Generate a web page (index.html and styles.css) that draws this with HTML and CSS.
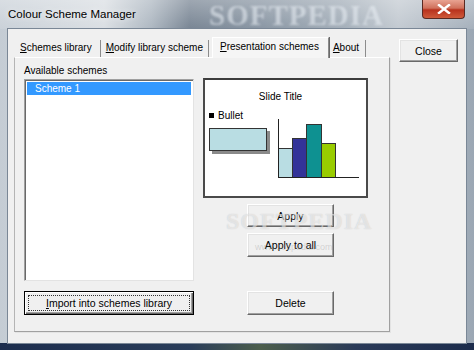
FILE: index.html
```html
<!DOCTYPE html>
<html>
<head>
    <title>Colour Scheme Manager</title>
    <link rel="stylesheet" href="styles.css">
</head>
<body>
    <div class="window">
        <div class="titlebar">
            <span class="title">Colour Scheme Manager</span>
            <span class="wm-title">SOFTPEDIA</span>
            <div class="close-x">
                <svg width="14" height="10" viewBox="0 0 14 10">
                    <path d="M2 1 L12 9 M12 1 L2 9" stroke="#fff" stroke-width="2.4" stroke-linecap="square"/>
                </svg>
            </div>
        </div>

        <div class="client">
            <div class="tabs-area">
                <!-- tab headers -->
                <div class="tabstrip">
                    <div class="tab first"><u>S</u>chemes library</div>
                    <div class="tab"><u>M</u>odify library scheme</div>
                    <div class="tab active"><u>P</u>resentation schemes</div>
                    <div class="tab last"><u>A</u>bout</div>
                </div>

                <!-- current page -->
                <div class="panel">
                    <div class="label">Available schemes</div>
                    <div></div>

                    <div class="listbox">
                        <div class="list-item selected">Scheme 1</div>
                    </div>

                    <div class="right-col">
                        <div class="preview">
                            <div class="slide-title">Slide Title</div>
                            <div class="slide-body">
                                <div class="slide-left">
                                    <div class="bullet"><span class="dot"></span>Bullet</div>
                                    <div class="slide-box"></div>
                                </div>
                                <svg class="chart" width="86" height="60" viewBox="0 0 86 60">
                                    <rect x="1.5" y="29.5" width="14" height="29" fill="#b9dde3" stroke="#333" />
                                    <rect x="15.5" y="19.5" width="14" height="39" fill="#333399" stroke="#333" />
                                    <rect x="29.5" y="5.5" width="15" height="53" fill="#0e9191" stroke="#333" />
                                    <rect x="44.5" y="24.5" width="14" height="34" fill="#99cc00" stroke="#333" />
                                    <path d="M1.5 0 V58.5 H82" stroke="#222" fill="none" />
                                </svg>
                            </div>
                        </div>
                        <button class="btn side-btn first">Apply</button>
                        <button class="btn side-btn">Apply to all</button>
                    </div>

                    <button class="btn default"><span class="focus"><u>I</u>mport into schemes library</span></button>
                    <div class="right-bottom">
                        <button class="btn side-btn">Delete</button>
                    </div>
                </div>
            </div>

            <div class="side">
                <button class="btn close-btn">Close</button>
            </div>

            <!-- softpedia watermark over the buttons -->
            <div class="wm-mid">SOFTPEDIA<span class="wm-url">www.softpedia.com</span></div>
        </div>
        <div class="bottom-frame"></div>
    </div>
</body>
</html>
```

FILE: styles.css
```css
body {
    margin: 0;
    font-family: "Liberation Sans", Arial, sans-serif;
    font-size: 10px;
    color: #000;
}
.window {
    width: 474px;
    height: 350px;
    overflow: hidden;
    position: relative;
    background: linear-gradient(90deg, #c4ccd4 0%, #d6dbe0 22%, #a4afba 32%, #6a7888 40%, #7c8a99 55%, #98a4b0 72%, #bcc4cc 84%, #9ba7b4 100%);
}
.titlebar {
    height: 29px;
    position: relative;
    display: flex;
    align-items: center;
    padding-left: 8px;
    background: linear-gradient(180deg, rgba(255,255,255,0.35), rgba(255,255,255,0.1));
}
.title {
    font-size: 11.5px;
    color: #000;
    margin-top: -1px;
    text-shadow: 0 0 6px rgba(255,255,255,0.9);
}
.wm-title {
    position: absolute;
    left: 209px;
    top: -1px;
    font-family: "Liberation Serif", serif;
    font-weight: bold;
    font-size: 29px;
    letter-spacing: 1px;
    color: rgba(235, 240, 245, 0.55);
    filter: blur(1.3px);
}
.close-x {
    position: absolute;
    right: 9px;
    top: 0;
    width: 43px;
    height: 19px;
    border: 1px solid #5a2a22;
    border-top: none;
    border-radius: 0 0 4px 4px;
    background: linear-gradient(180deg, #e8a392 0%, #d0715c 45%, #b8321d 55%, #cf5a3a 100%);
    display: flex;
    align-items: center;
    justify-content: center;
    box-sizing: border-box;
}
.client {
    position: relative;
    margin: 0 8px;
    height: 314px;
    background: #f0f0f0;
    box-shadow: 0 0 0 1px #7a8796;
    display: flex;
    padding: 8px 0 0 6px;
    box-sizing: border-box;
}
.tabs-area {
    width: 376px;
}
.tabstrip {
    height: 20px;
    display: flex;
    align-items: flex-end;
}
.tab {
    height: 17px;
    line-height: 16px;
    padding: 0 5px 0 5px;
    box-sizing: border-box;
    border-right: 1px solid #8c8c8c;
    white-space: nowrap;
}
.tab.first {
    padding: 0 8px 0 6px;
}
.tab.active {
    line-height: 18px;
    padding: 0 9px 0 7px;
    margin-left: 3px;
    background: #f5f5f5;
    border-top: 1px solid #fff;
    border-left: 1px solid #fff;
    border-right: 1px solid #8c8c8c;
    box-shadow: 1px 0 0 #6a6a6a;
    position: relative;
    z-index: 1;
    margin-bottom: -1px;
    height: 21px;
}
.tab.last {
    padding: 0 6px 0 4px;
}
.panel {
    height: 275px;
    box-sizing: border-box;
    border: 1px solid #a0a0a0;
    border-top-color: #fff;
    border-left-color: #b4b4b4;
    box-shadow: 1px 1px 0 #e3e3e3;
    display: grid;
    grid-template-columns: 170px 165px;
    grid-template-rows: 15px 202px 28px;
    column-gap: 9px;
    row-gap: 6px;
    padding: 0 0 0 9px;
}
.label {
    line-height: 13px;
    align-self: end;
    margin-bottom: -4px;
}
.listbox {
    background: #fff;
    border: 1px solid;
    border-color: #a0a0a0 #e3e3e3 #e3e3e3 #a0a0a0;
    box-shadow: inset 1px 1px 0 #696969;
    padding: 2px 2px 0 2px;
    box-sizing: border-box;
}
.list-item {
    height: 13px;
    line-height: 13px;
    padding-left: 8px;
}
.list-item.selected {
    background: #3399ff;
    color: #fff;
}
.right-col {
    display: flex;
    flex-direction: column;
    margin-top: -1px;
}
.preview {
    height: 120px;
    box-sizing: border-box;
    background: #fff;
    border: 2px solid #4a4a4a;
    border-top-color: #3c3c3c;
}
.slide-title {
    text-align: center;
    padding-right: 10px;
    margin-top: 10px;
    line-height: 13px;
}
.slide-body {
    display: flex;
    margin-top: 6px;
}
.slide-left {
    width: 75px;
    padding-left: 4px;
    box-sizing: border-box;
}
.bullet {
    line-height: 13px;
    display: flex;
    align-items: center;
}
.dot {
    width: 5px;
    height: 5px;
    background: #000;
    margin-right: 4px;
}
.slide-box {
    width: 58px;
    height: 23px;
    margin-top: 6px;
    background: #b9dde3;
    border: 1px solid #333;
    box-sizing: border-box;
    box-shadow: 3px 3px 0 #8a8a8a;
}
.chart {
    margin-top: 10px;
    margin-left: -3px;
}
.btn {
    font-family: "Liberation Sans", Arial, sans-serif;
    font-size: 10.5px;
    color: #000;
    background: #f0f0f0;
    border: 1px solid;
    border-color: #fff #696969 #696969 #fff;
    box-shadow: inset -1px -1px 0 #a0a0a0, inset 1px 1px 0 #e3e3e3;
    padding: 0;
    margin: 0;
}
.side-btn {
    width: 87px;
    height: 24px;
    margin-left: 44px;
}
.side-btn.first {
    margin-top: 6px;
    height: 23px;
    margin-bottom: 6px;
}
.btn.default {
    height: 24px;
    align-self: end;
    border: 1px solid #000;
    box-shadow: inset 1px 1px 0 #fff, inset -1px -1px 0 #696969, inset -2px -2px 0 #a0a0a0;
    padding: 3px;
    display: flex;
}
.focus {
    flex: 1;
    border: 1px dotted #333;
    display: flex;
    align-items: center;
    justify-content: center;
}
.right-bottom {
    display: flex;
    align-self: end;
}
.side {
    padding: 2px 0 0 9px;
}
.close-btn {
    width: 59px;
    height: 23px;
}
.wm-mid {
    position: absolute;
    left: 218px;
    top: 179px;
    font-family: "Liberation Serif", serif;
    font-weight: bold;
    font-size: 24px;
    letter-spacing: 1px;
    color: rgba(255, 255, 255, 0.5);
    text-shadow: 0 0 1px rgba(120, 120, 120, 0.35);
    pointer-events: none;
}
.wm-url {
    position: absolute;
    left: 29px;
    top: 34px;
    font-family: "Liberation Sans", Arial, sans-serif;
    font-weight: normal;
    font-size: 9px;
    letter-spacing: 0;
    color: rgba(150, 150, 150, 0.35);
    text-shadow: none;
}
.bottom-frame {
    height: 7px;
    background: linear-gradient(90deg, #1c2d4d 0%, #2a3d5a 40%, #4c5e4c 55%, #2a3a58 75%, #1c2c4c 100%);
}
```
